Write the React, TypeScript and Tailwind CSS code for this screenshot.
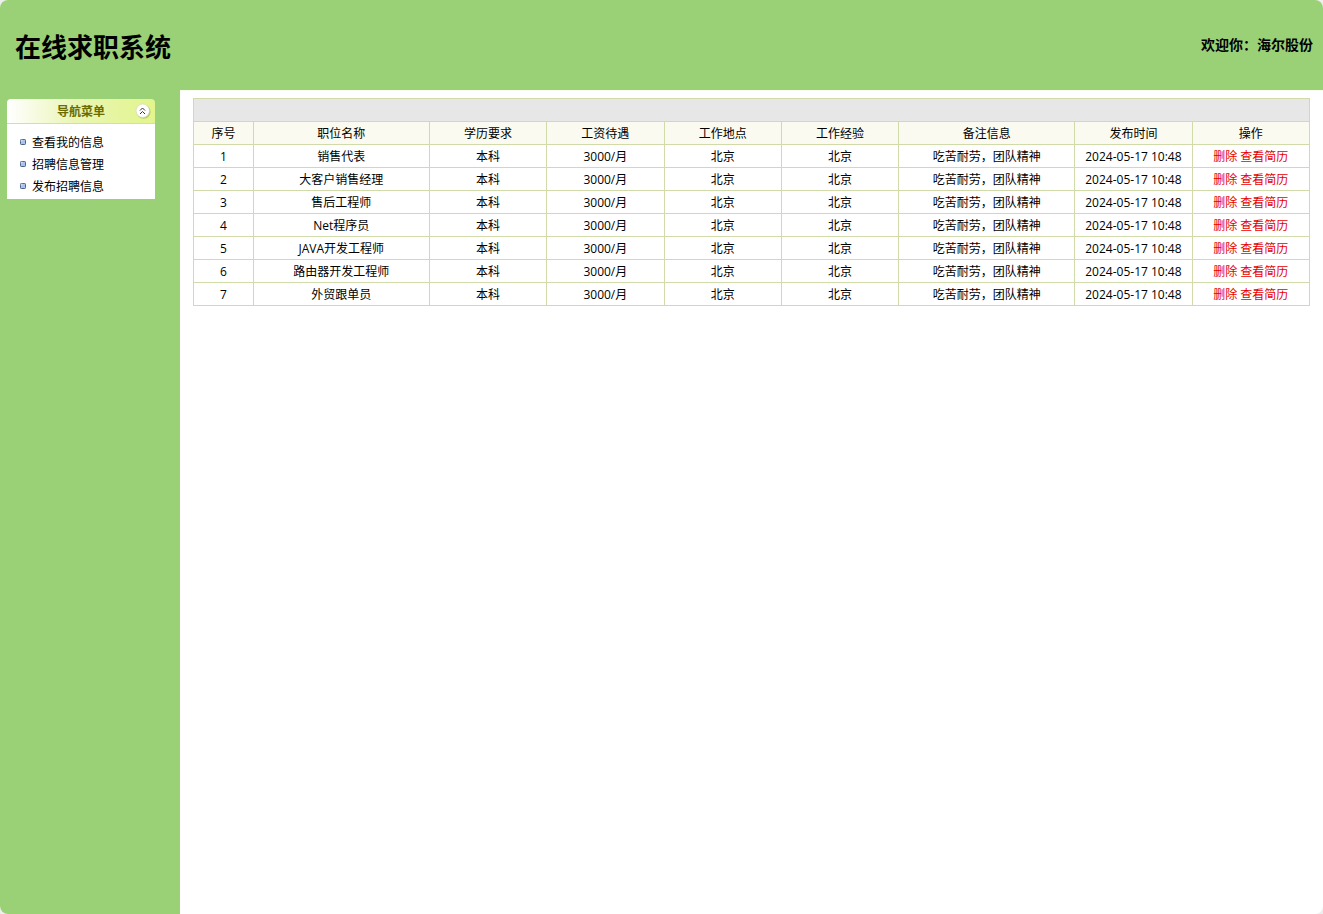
import { useState } from "react";

const menu = ["查看我的信息", "招聘信息管理", "发布招聘信息"];

const columns = [
  { label: "序号", width: "w-[5.1%]" },
  { label: "职位名称", width: "w-[15%]" },
  { label: "学历要求", width: "w-[10%]" },
  { label: "工资待遇", width: "w-[10%]" },
  { label: "工作地点", width: "w-[10%]" },
  { label: "工作经验", width: "w-[10%]" },
  { label: "备注信息", width: "w-[15%]" },
  { label: "发布时间", width: "w-[10%]" },
  { label: "操作", width: "w-[10%]" },
];

const positions = [
  "销售代表",
  "大客户销售经理",
  "售后工程师",
  "Net程序员",
  "JAVA开发工程师",
  "路由器开发工程师",
  "外贸跟单员",
];

const jobs = positions.map((name, i) => ({
  id: i + 1,
  name,
  degree: "本科",
  salary: "3000/月",
  place: "北京",
  experience: "北京",
  remark: "吃苦耐劳，团队精神",
  date: "2024-05-17 10:48",
}));

function Header() {
  return (
    <header className="flex h-[90px] items-center justify-between bg-[#9ad176] pt-1 pr-[10px] pl-[15px]">
      <h1 className="text-[26px] leading-8 font-bold">在线求职系统</h1>
      <p className="pb-1 text-sm font-bold">欢迎你：海尔股份</p>
    </header>
  );
}

function CollapseIcon({ open }: { open: boolean }) {
  return (
    <svg width="16" height="16" viewBox="0 0 16 16" aria-hidden>
      <circle cx="8.6" cy="8.8" r="7" fill="#a9b45c" opacity="0.7" />
      <circle cx="7.7" cy="7.7" r="6.7" fill="#fff" stroke="#d5d8c0" strokeWidth="0.7" />
      <path
        d={open ? "M5 7.5 L7.5 5 L10 7.5 M5 11 L7.5 8.5 L10 11" : "M5 5 L7.5 7.5 L10 5 M5 8.5 L7.5 11 L10 8.5"}
        fill="none"
        stroke="#333"
        strokeWidth="1"
      />
    </svg>
  );
}

function Sidebar() {
  const [open, setOpen] = useState(true);

  return (
    <aside className="w-[180px] shrink-0 bg-[#9ad176] pt-[9px] pl-[7px]">
      <div className="w-[148px]">
        <button
          type="button"
          aria-expanded={open}
          onClick={() => setOpen((v) => !v)}
          className="grid h-[25px] w-full grid-cols-[20px_1fr_20px] items-center rounded-t border-b border-[#d5dcae] bg-linear-to-r from-white via-[#eaf5b5] via-45% to-[#e2f58c] text-xs font-bold text-[#6b6b00]"
        >
          <span className="col-start-2 pt-[2px]">导航菜单</span>
          <CollapseIcon open={open} />
        </button>
        {open && (
          <ul className="bg-white pt-[7px] pb-[2px]">
            {menu.map((item) => (
              <li key={item} className="flex h-[22px] items-center gap-[6px] pl-[13px]">
                <svg width="6" height="6" viewBox="0 0 6 6" aria-hidden>
                  <rect x="0.5" y="0.5" width="5" height="5" rx="0.8" fill="#a8c4ee" stroke="#4c6288" />
                  <path d="M1.2 3 V1.2 H3.2" fill="none" stroke="#dce9fb" strokeWidth="0.7" />
                </svg>
                <a href="#" className="pt-[2px] text-xs">
                  {item}
                </a>
              </li>
            ))}
          </ul>
        )}
      </div>
    </aside>
  );
}

function JobTable() {
  return (
    <table className="w-full table-fixed border-collapse text-center text-xs leading-5 whitespace-nowrap [&_td]:border [&_td]:border-[#d1dbaa] [&_td]:pt-[2px] [&_th]:border [&_th]:border-[#d1dbaa] [&_th]:pt-[2px] [&_th]:font-normal">
      <colgroup>
        {columns.map((col) => (
          <col key={col.label} className={col.width} />
        ))}
      </colgroup>
      <thead>
        <tr className="h-[23px] bg-[#e7e7e7]">
          <td colSpan={columns.length} />
        </tr>
        <tr className="h-[23px] bg-[#fafaf1]">
          {columns.map((col) => (
            <th key={col.label}>{col.label}</th>
          ))}
        </tr>
      </thead>
      <tbody>
        {jobs.map((job) => (
          <tr key={job.id} className="h-[23px]">
            <td>{job.id}</td>
            <td>{job.name}</td>
            <td>{job.degree}</td>
            <td>{job.salary}</td>
            <td>{job.place}</td>
            <td>{job.experience}</td>
            <td>{job.remark}</td>
            <td>{job.date}</td>
            <td className="text-[#e60000]">
              <a href="#">删除</a> <a href="#">查看简历</a>
            </td>
          </tr>
        ))}
      </tbody>
    </table>
  );
}

export default function App() {
  return (
    <div className="bg-[#eeeeee]">
      <div className="flex min-h-screen flex-col overflow-hidden rounded-lg bg-white font-['Open_Sans','Noto_Sans_CJK_SC',sans-serif] text-black">
        <Header />
        <div className="flex flex-1">
          <Sidebar />
          <main className="min-w-0 flex-1 border-t border-[#f8ffec] px-[13px] pt-[7px]">
            <JobTable />
          </main>
        </div>
      </div>
    </div>
  );
}
